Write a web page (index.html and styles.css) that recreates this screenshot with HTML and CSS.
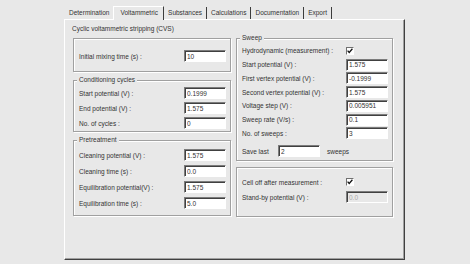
FILE: index.html
```html
<!DOCTYPE html>
<html>
  <head>
    <title>Voltammetric</title>
    <link rel="stylesheet" href="styles.css">
  </head>
  <body>
    <div class="dialog">
      <div class="tabs">
        <span class="tab">Determination</span>
        <span class="tab active">Voltammetric</span>
        <span class="tab">Substances</span>
        <span class="tab">Calculations</span>
        <span class="tab">Documentation</span>
        <span class="tab">Export</span>
      </div>
      <div class="page">
        <div class="col left">
          <div class="title">Cyclic voltammetric stripping (CVS)</div>
          <div class="box mixing">
            <div class="row"><label>Initial mixing time (s) :</label><input type="text" value="10" readonly></div>
          </div>
          <fieldset class="box conditioning">
            <legend>Conditioning cycles</legend>
            <div class="row"><label>Start potential (V) :</label><input type="text" value="0.1999" readonly></div>
            <div class="row"><label>End potential (V) :</label><input type="text" value="1.575" readonly></div>
            <div class="row"><label>No. of cycles :</label><input type="text" value="0" readonly></div>
          </fieldset>
          <fieldset class="box pretreatment">
            <legend>Pretreatment</legend>
            <div class="row"><label>Cleaning potential (V) :</label><input type="text" value="1.575" readonly></div>
            <div class="row"><label>Cleaning time (s) :</label><input type="text" value="0.0" readonly></div>
            <div class="row"><label>Equilibration potential(V) :</label><input type="text" value="1.575" readonly></div>
            <div class="row"><label>Equilibration time (s) :</label><input type="text" value="5.0" readonly></div>
          </fieldset>
        </div>
        <div class="col right">
          <fieldset class="box sweep">
            <legend>Sweep</legend>
            <div class="row"><label>Hydrodynamic (measurement) :</label><span class="field"><span class="check"><svg width="6" height="6" viewBox="0 0 6 6"><path d="M0.6 2.6 L2.2 4.4 L5.4 0.8" fill="none" stroke="#111" stroke-width="1.3"/></svg></span></span></div>
            <div class="row"><label>Start potential (V) :</label><input type="text" value="1.575" readonly></div>
            <div class="row"><label>First vertex potential (V) :</label><input type="text" value="-0.1999" readonly></div>
            <div class="row"><label>Second vertex potential (V) :</label><input type="text" value="1.575" readonly></div>
            <div class="row"><label>Voltage step (V) :</label><input type="text" value="0.005951" readonly></div>
            <div class="row"><label>Sweep rate (V/s) :</label><input type="text" value="0.1" readonly></div>
            <div class="row"><label>No. of sweeps :</label><input type="text" value="3" readonly></div>
            <div class="row save"><label class="save-label">Save last</label><input type="text" value="2" readonly><span class="unit">sweeps</span></div>
          </fieldset>
          <div class="box cell">
            <div class="row"><label>Cell off after measurement :</label><span class="field"><span class="check"><svg width="6" height="6" viewBox="0 0 6 6"><path d="M0.6 2.6 L2.2 4.4 L5.4 0.8" fill="none" stroke="#111" stroke-width="1.3"/></svg></span></span></div>
            <div class="row"><label>Stand-by potential (V) :</label><input type="text" value="0.0" disabled></div>
          </div>
        </div>
      </div>
    </div>
  </body>
</html>
```

FILE: styles.css
```css
body {
  margin: 0;
  background-color: #e8e8e8;
  font-family: "Liberation Sans", Arial, sans-serif;
  font-size: 6.5px;
  color: #333;
}
.dialog {
  width: 341px;
  margin-left: 64px;
  padding-top: 5px;
}
.tabs {
  display: flex;
  align-items: flex-end;
  height: 14px;
  padding-left: 1px;
}
.tab {
  height: 12px;
  line-height: 11px;
  padding: 0 4px;
  border-right: 1px solid #3c3c3c;
}
.tab.active {
  position: relative;
  height: 14px;
  line-height: 12px;
  margin-left: -1px;
  margin-bottom: -1px;
  padding: 0 5px 0 6px;
  border-left: 1px solid #fff;
  border-top: 1px solid #fff;
  background-color: #e8e8e8;
  box-sizing: border-box;
}
.page {
  display: flex;
  gap: 5px;
  height: 241px;
  box-sizing: border-box;
  padding: 4px 0 0 8px;
  border: 1px solid;
  border-color: #fff #404040 #404040 #fff;
  box-shadow: inset -1px -1px 0 #a0a0a0;
}
.col {
  display: flex;
  flex-direction: column;
  gap: 3px;
}
.col.left {
  width: 158px;
}
.col.right {
  width: 157px;
  padding-top: 9px;
}
.title {
  line-height: 10px;
  margin: 0 0 1px -1px;
}
.box {
  margin: 0;
  min-width: 0;
  border: 1px solid #a0a0a0;
  box-shadow: inset 1px 1px 0 #fff, 1px 1px 0 #fff;
  display: flex;
  flex-direction: column;
  gap: 1px;
}
.box legend {
  margin-left: 3px;
  padding: 0 2px;
  line-height: 10px;
  background-color: #e8e8e8;
}
.row {
  display: flex;
  align-items: center;
  height: 14px;
  padding: 0 4px 0 5px;
}
.row label {
  flex: 1;
  white-space: nowrap;
}
.row input {
  width: 42px;
  height: 12px;
  margin: 0;
  padding: 0 0 0 2px;
  box-sizing: border-box;
  border: 1px solid;
  border-color: #7c7c7c #fff #fff #7c7c7c;
  box-shadow: inset 1px 1px 0 #404040;
  background-color: #fff;
  font: inherit;
  color: #333;
  outline: none;
}
.row input:disabled {
  background-color: #e8e8e8;
  color: #a8a8a8;
}
.field {
  width: 42px;
}
.check {
  display: flex;
  align-items: center;
  justify-content: center;
  width: 8px;
  height: 8px;
  box-sizing: border-box;
  border: 1px solid;
  border-color: #707070 #fff #fff #707070;
  background-color: #fff;
}
.mixing {
  padding: 10px 0 8px;
}
.conditioning {
  padding: 1px 0;
}
.pretreatment {
  padding: 3px 0 5px;
  gap: 2px;
}
.sweep {
  padding: 1px 0 2px;
  gap: 0;
}
.sweep .row {
  height: 13.75px;
}
.row.save {
  height: 14px;
  margin-top: 3.75px;
}
.row .save-label {
  flex: none;
  width: 36px;
}
.unit {
  margin-left: 7px;
}
.cell {
  margin-top: 3px;
  padding: 7px 0 12px;
}
```
